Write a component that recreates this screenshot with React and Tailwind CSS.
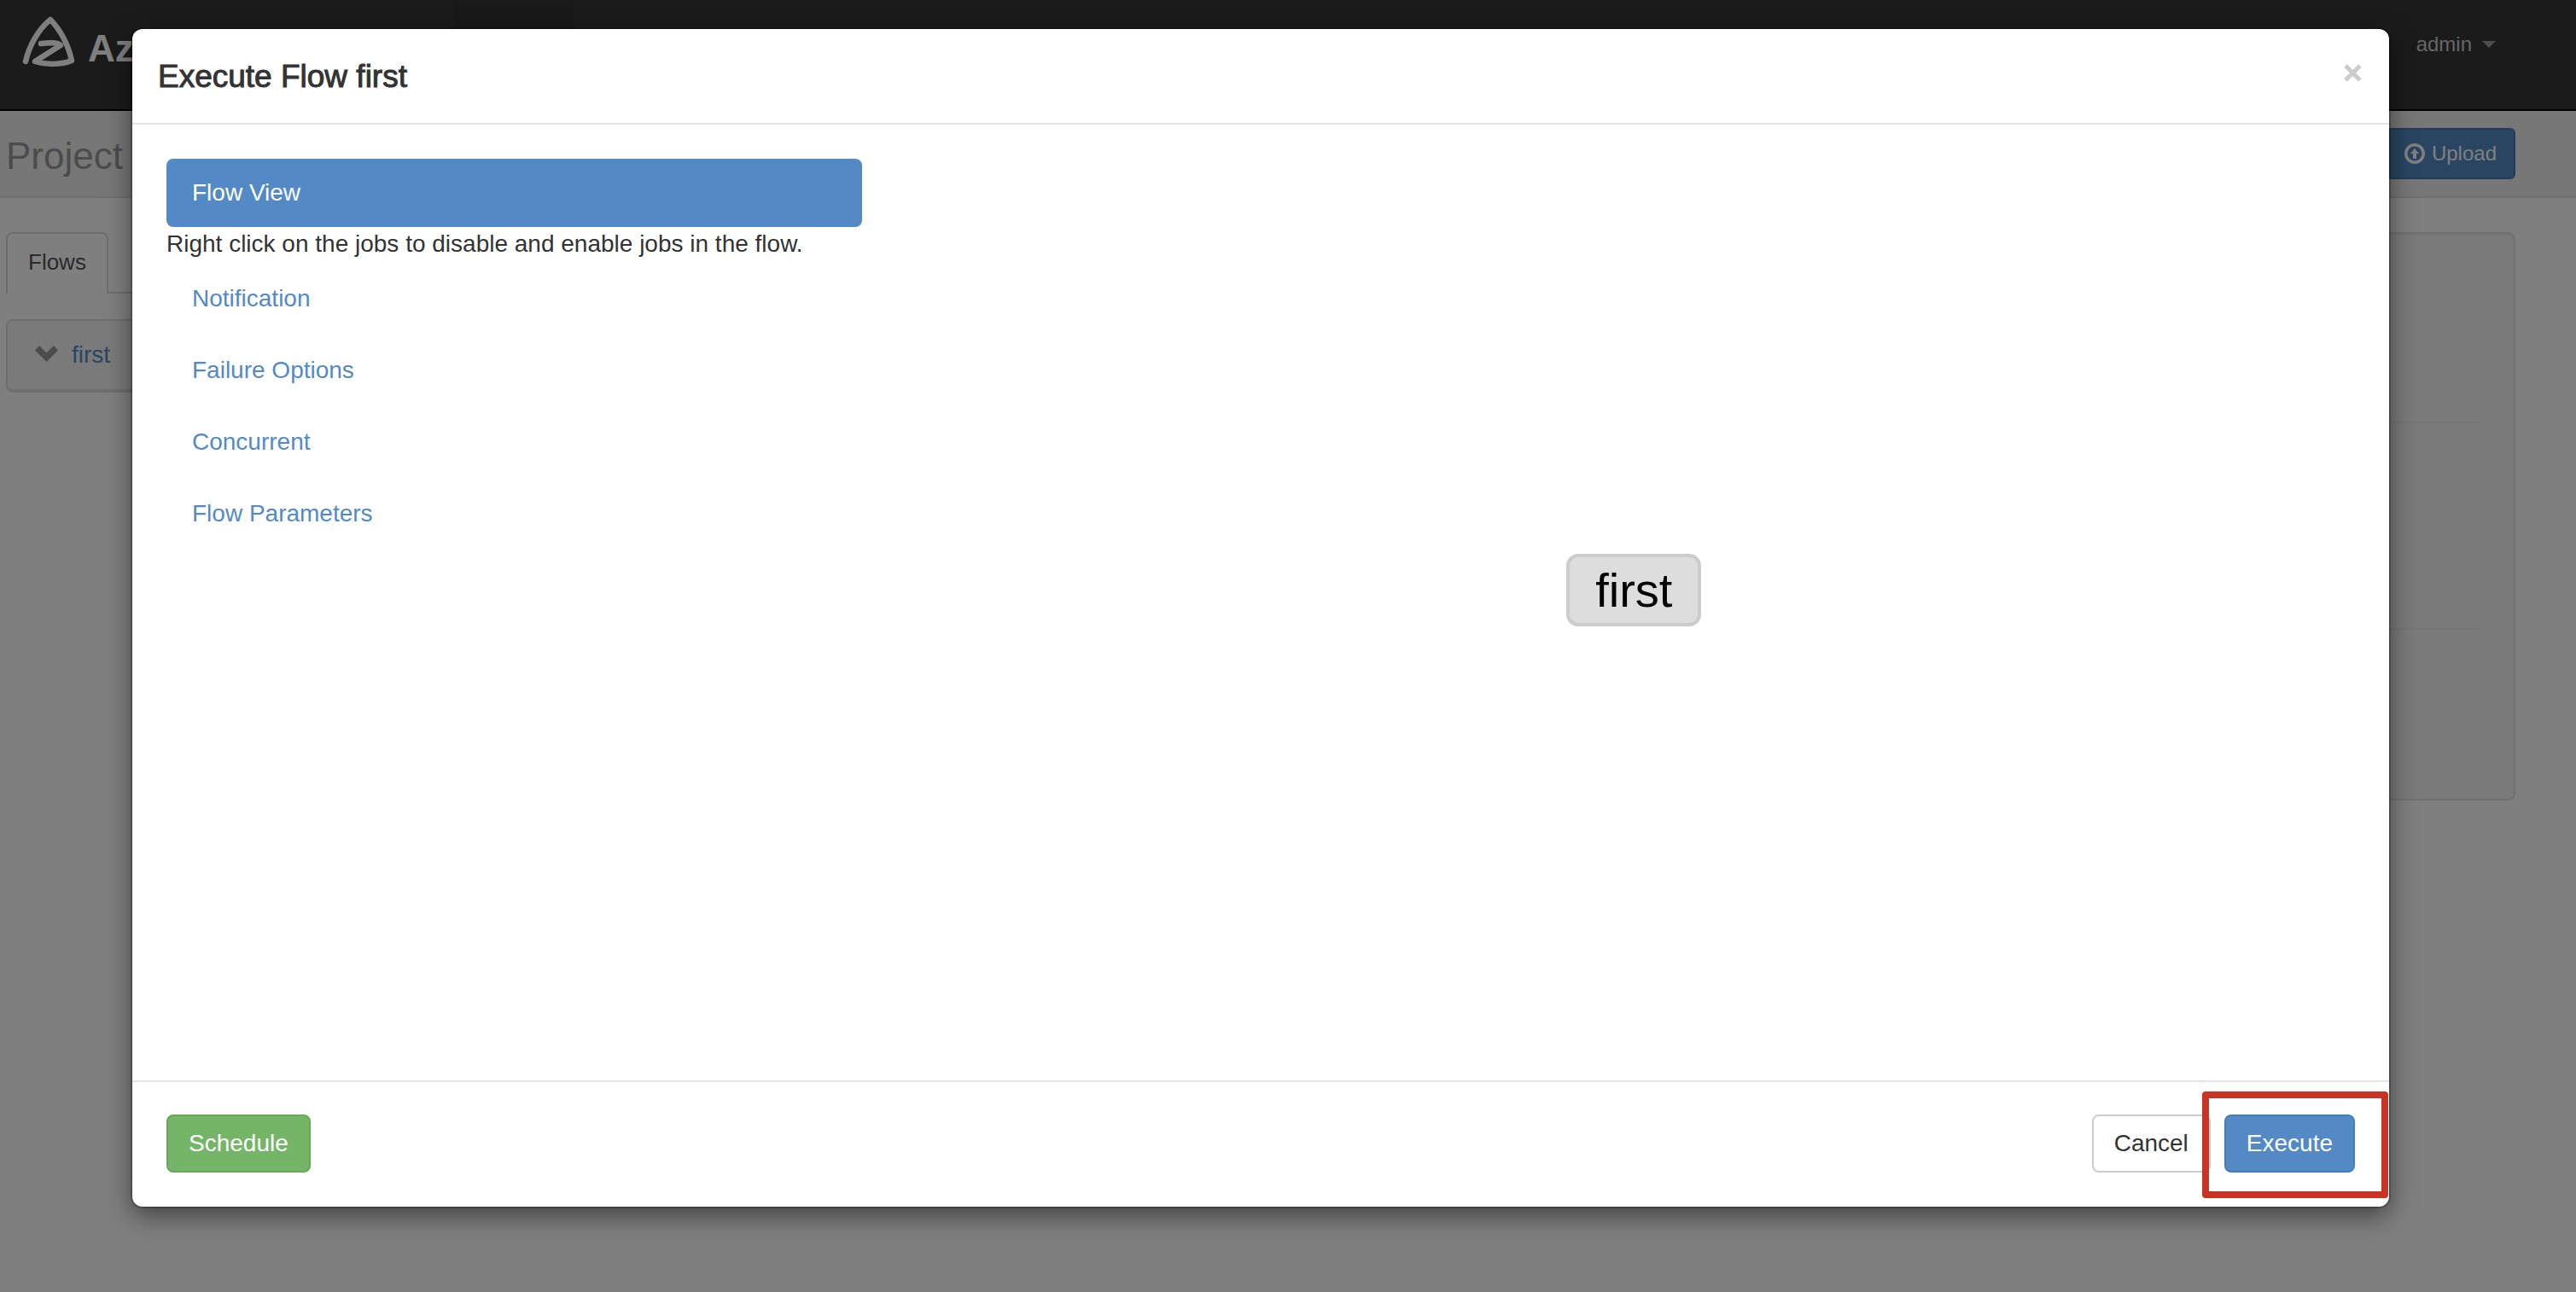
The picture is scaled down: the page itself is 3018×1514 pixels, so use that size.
import React from "react";

function Logo() {
  return (
    <svg viewBox="0 0 64 68" className="h-[68px] w-16" fill="none" stroke="#fff" strokeLinecap="round" strokeLinejoin="round" aria-hidden="true">
      <path d="M6 56C10 38 21 18 35 7C46 18 56 36 60 55C48 60 30 60 17 56L47 37C45 34 36 33.500 24 35" strokeWidth="6.500" />
    </svg>
  );
}

function UploadIcon() {
  return (
    <svg viewBox="0 0 24 24" className="h-6 w-6" aria-hidden="true">
      <circle cx="12" cy="12" r="10.250" fill="none" stroke="#fff" strokeWidth="3.500" />
      <path d="M12 6l5 6h-3v6h-4v-6H7z" fill="#fff" />
    </svg>
  );
}

function Page() {
  return (
    <div className="flex min-h-screen flex-col bg-white">
      <nav className="flex h-[130px] items-start border-b-2 border-black bg-[#373737] pl-6">
        <a href="#home" className="flex gap-[15px] pt-4">
          <Logo />
          <span className="pt-4 text-[44px]/[50px] font-bold text-white">Az</span>
        </a>
        <div className="ml-[374px] h-full w-[142px] bg-[#323232]" />
        <button type="button" className="mr-[94px] ml-auto flex items-center gap-3 pt-9 text-2xl/8 text-[#ccc]">
          admin
          <svg viewBox="0 0 16 8" className="h-2 w-4" aria-hidden="true">
            <path d="M0 0h16l-8 8z" fill="#999" />
          </svg>
        </button>
      </nav>
      <header className="flex h-[102px] items-center justify-between border-b-2 border-[#dfdfdf] bg-[#eee] pr-[71px] pl-[7px]">
        <h1 className="pt-1.5 text-[44px]/[50px] text-[#999]">Project</h1>
        <button type="button" className="flex h-[60px] items-center gap-2 rounded-md border-2 border-[#4379b3] bg-[#538ac5] px-5 text-2xl text-white">
          <UploadIcon />
          Upload
        </button>
      </header>
      <main className="flex gap-[60px] pt-10 pr-[71px] pl-[7px]">
        <section className="flex-1">
          <div className="flex border-b-2 border-[#ddd]">
            <a href="#flows" className="-mb-0.5 rounded-t-lg border-2 border-b-0 border-[#ddd] bg-white px-6 pt-[13px] pb-[17px] text-[26px]/[40px] text-[#555]">
              Flows
            </a>
          </div>
          <div className="mt-[30px] flex h-[86px] items-center gap-4 rounded-lg border-2 border-b-4 border-[#ddd] bg-[#f5f5f5] pl-8">
            <svg viewBox="0 0 27 19" className="mb-1 h-[19px] w-[27px]" aria-hidden="true">
              <path d="M0 5.500L5 0l8.500 8.500L22 0l5 5.500L13.500 19z" fill="#999" />
            </svg>
            <a href="#first" className="text-[28px]/[40px] text-[#538ac5]">first</a>
          </div>
        </section>
        <aside className="h-[666px] w-1/4 rounded-lg border-2 border-[#e3e3e3] bg-[#f5f5f5] px-[38px] shadow-[inset_0_2px_2px_rgba(0,0,0,0.05)]">
          <hr className="mt-[220px] border-t-2 border-[#eee]" />
          <hr className="mt-[240px] border-t-2 border-[#eee]" />
        </aside>
      </main>
    </div>
  );
}

const options = ["Notification", "Failure Options", "Concurrent", "Flow Parameters"];

function ExecuteDialog() {
  return (
    <div role="dialog" aria-modal="true" aria-labelledby="dialog-title" className="relative rounded-xl bg-white text-[28px]/[40px] text-[#333] shadow-[0_0_0_2px_rgba(0,0,0,0.2),0_10px_30px_rgba(0,0,0,0.5)]">
      <header className="flex items-start justify-between border-b-2 border-[#e5e5e5] px-[30px] pt-[30px] pb-7">
        <h2 id="dialog-title" className="text-[37px]/[52px] [-webkit-text-stroke:1px_#333]">Execute Flow first</h2>
        <button type="button" aria-label="Close" className="pt-[11px] pr-0.5">
          <svg viewBox="0 0 21 21" className="h-[21px] w-[21px]" aria-hidden="true">
            <path d="M2 2l17 17M19 2l-17 17" stroke="#ccc" strokeWidth="5" />
          </svg>
        </button>
      </header>
      <div className="-mx-[30px] grid grid-cols-3 px-10 pt-10 pb-[70px]">
        <ul className="flex flex-col px-[30px]">
          <li>
            <a href="#flow-view" className="block rounded-lg bg-[#538ac5] px-[30px] py-5 text-white">Flow View</a>
            <p className="whitespace-nowrap">Right click on the jobs to disable and enable jobs in the flow.</p>
          </li>
          {options.map((label) => (
            <li key={label} className="mt-1">
              <a href="#option" className="block px-[30px] py-5 text-[#538ac5]">{label}</a>
            </li>
          ))}
        </ul>
        <div className="col-span-2 flex min-h-[1010px] items-center justify-center px-[30px]">
          <div className="rounded-[14px] border-4 border-[#ccc] bg-[#ddd] px-[30px] pt-[7px] pb-1.5 text-[56px]/[64px] text-black">first</div>
        </div>
      </div>
      <footer className="flex items-center border-t-2 border-[#e5e5e5] px-10 pt-[38px] pb-10">
        <button type="button" className="rounded-lg border-2 border-[#65a957] bg-[#75b568] px-6 py-3 text-white">Schedule</button>
        <button type="button" className="ml-auto rounded-lg border-2 border-[#ccc] bg-white px-6 py-3">Cancel</button>
        <button type="button" className="ml-4 rounded-lg border-2 border-[#437db9] bg-[#538ac5] px-6 py-3 text-white">Execute</button>
      </footer>
      <div className="pointer-events-none absolute right-px bottom-[10px] h-[125px] w-[218px] rounded border-8 border-[#c93524]" />
    </div>
  );
}

export default function App() {
  return (
    <div className="relative h-screen overflow-hidden font-['Liberation_Sans',Arial,sans-serif]">
      <Page />
      <div className="absolute inset-0 bg-black/50 pt-[34px] pr-[219px] pl-[155px]">
        <ExecuteDialog />
      </div>
    </div>
  );
}
